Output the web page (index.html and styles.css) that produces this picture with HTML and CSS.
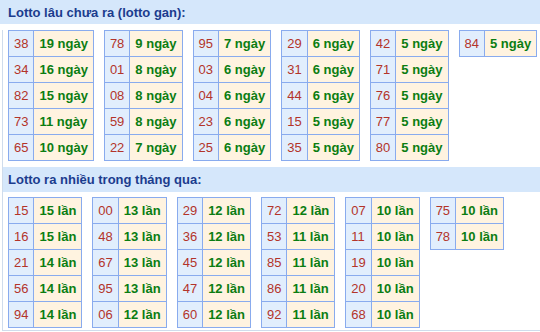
FILE: index.html
```html
<!DOCTYPE html>
<html>
<head>
<meta charset="utf-8">
<link rel="stylesheet" href="styles.css">
</head>
<body>
<div class="box">
  <div class="head head-first">Lotto lâu chưa ra (lotto gan):</div>
  <div class="body">
    <div class="tables tables-gan">
      <table><tr><td class="n">38</td><td class="v">19 ngày</td></tr><tr><td class="n">34</td><td class="v">16 ngày</td></tr><tr><td class="n">82</td><td class="v">15 ngày</td></tr><tr><td class="n">73</td><td class="v">11 ngày</td></tr><tr><td class="n">65</td><td class="v">10 ngày</td></tr></table>
      <table><tr><td class="n">78</td><td class="v">9 ngày</td></tr><tr><td class="n">01</td><td class="v">8 ngày</td></tr><tr><td class="n">08</td><td class="v">8 ngày</td></tr><tr><td class="n">59</td><td class="v">8 ngày</td></tr><tr><td class="n">22</td><td class="v">7 ngày</td></tr></table>
      <table><tr><td class="n">95</td><td class="v">7 ngày</td></tr><tr><td class="n">03</td><td class="v">6 ngày</td></tr><tr><td class="n">04</td><td class="v">6 ngày</td></tr><tr><td class="n">23</td><td class="v">6 ngày</td></tr><tr><td class="n">25</td><td class="v">6 ngày</td></tr></table>
      <table><tr><td class="n">29</td><td class="v">6 ngày</td></tr><tr><td class="n">31</td><td class="v">6 ngày</td></tr><tr><td class="n">44</td><td class="v">6 ngày</td></tr><tr><td class="n">15</td><td class="v">5 ngày</td></tr><tr><td class="n">35</td><td class="v">5 ngày</td></tr></table>
      <table><tr><td class="n">42</td><td class="v">5 ngày</td></tr><tr><td class="n">71</td><td class="v">5 ngày</td></tr><tr><td class="n">76</td><td class="v">5 ngày</td></tr><tr><td class="n">77</td><td class="v">5 ngày</td></tr><tr><td class="n">80</td><td class="v">5 ngày</td></tr></table>
      <table><tr><td class="n">84</td><td class="v">5 ngày</td></tr></table>
    </div>
    <div class="head head-second">Lotto ra nhiều trong tháng qua:</div>
    <div class="tables tables-nhieu">
      <table><tr><td class="n">15</td><td class="v">15 lần</td></tr><tr><td class="n">16</td><td class="v">15 lần</td></tr><tr><td class="n">21</td><td class="v">14 lần</td></tr><tr><td class="n">56</td><td class="v">14 lần</td></tr><tr><td class="n">94</td><td class="v">14 lần</td></tr></table>
      <table><tr><td class="n">00</td><td class="v">13 lần</td></tr><tr><td class="n">48</td><td class="v">13 lần</td></tr><tr><td class="n">67</td><td class="v">13 lần</td></tr><tr><td class="n">95</td><td class="v">13 lần</td></tr><tr><td class="n">06</td><td class="v">12 lần</td></tr></table>
      <table><tr><td class="n">29</td><td class="v">12 lần</td></tr><tr><td class="n">36</td><td class="v">12 lần</td></tr><tr><td class="n">45</td><td class="v">12 lần</td></tr><tr><td class="n">47</td><td class="v">12 lần</td></tr><tr><td class="n">60</td><td class="v">12 lần</td></tr></table>
      <table><tr><td class="n">72</td><td class="v">12 lần</td></tr><tr><td class="n">53</td><td class="v">11 lần</td></tr><tr><td class="n">85</td><td class="v">11 lần</td></tr><tr><td class="n">86</td><td class="v">11 lần</td></tr><tr><td class="n">92</td><td class="v">11 lần</td></tr></table>
      <table><tr><td class="n">07</td><td class="v">10 lần</td></tr><tr><td class="n">11</td><td class="v">10 lần</td></tr><tr><td class="n">19</td><td class="v">10 lần</td></tr><tr><td class="n">20</td><td class="v">10 lần</td></tr><tr><td class="n">68</td><td class="v">10 lần</td></tr></table>
      <table><tr><td class="n">75</td><td class="v">10 lần</td></tr><tr><td class="n">78</td><td class="v">10 lần</td></tr></table>
    </div>
  </div>
</div>
</body>
</html>
```
FILE: styles.css
```css
html, body {
  margin: 0;
  padding: 0;
  background: #ffffff;
}
body {
  font-family: "Liberation Sans", Arial, sans-serif;
  font-size: 13px;
  width: 560px;
}
.head {
  background: #d5e7fb;
  color: #1b3c8e;
  font-weight: bold;
  font-size: 13px;
  line-height: 15px;
  padding-left: 8px;
  box-sizing: border-box;
}
.head-first {
  height: 24px;
  padding-top: 5px;
}
.body {
  margin-left: 2px;
  border-left: 1px solid #cfdcec;
  border-bottom: 1px solid #cfdcec;
  padding-bottom: 2px;
}
.head-second {
  height: 25px;
  padding-top: 5px;
  padding-left: 5px;
  margin-top: 6px;
}
.tables {
  display: flex;
  align-items: flex-start;
  gap: 10px;
  padding-left: 5px;
}
.tables-gan {
  margin-top: 6px;
}
.tables-nhieu {
  margin-top: 5px;
}
table {
  border-collapse: collapse;
  flex: none;
}
td {
  border: 1px solid #89abee;
  padding: 5px;
  line-height: 15px;
  height: 15px;
  white-space: nowrap;
}
td.n {
  background: #e1eefd;
  color: #b3342a;
}
td.v {
  background: #fff3e0;
  color: #0b7d12;
  font-weight: bold;
}
```
